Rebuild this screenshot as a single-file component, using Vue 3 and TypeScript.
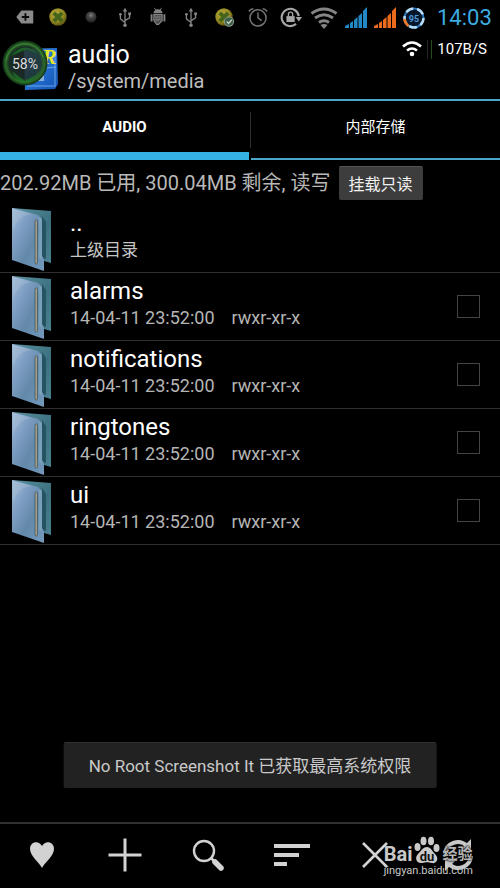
<script setup lang="ts">
import { ref } from 'vue'

interface Entry {
  name: string
  date: string
  mode: string
  checked: boolean
}

const activeTab = ref(0)
const tabs: string[] = ['AUDIO', '内部存储']
const entries = ref<Entry[]>(
  ['alarms', 'notifications', 'ringtones', 'ui'].map((name) => ({
    name,
    date: '14-04-11 23:52:00',
    mode: 'rwxr-xr-x',
    checked: false,
  })),
)
</script>

<template>
  <div class="screen">
    <svg class="defs" aria-hidden="true">
      <defs>
        <linearGradient id="cover" x1="0" y1="0" x2="1" y2="1">
          <stop offset="0" stop-color="#a3bdd9" />
          <stop offset="0.3" stop-color="#7f9fc4" />
          <stop offset="0.6" stop-color="#6389a9" />
          <stop offset="1" stop-color="#7399bd" />
        </linearGradient>
        <linearGradient id="back" x1="0" y1="0" x2="1" y2="1">
          <stop offset="0" stop-color="#5c929f" />
          <stop offset="0.6" stop-color="#3b7180" />
          <stop offset="1" stop-color="#4b8291" />
        </linearGradient>
        <radialGradient id="ball" cx="0.4" cy="0.35" r="0.7">
          <stop offset="0" stop-color="#b5a93c" />
          <stop offset="0.6" stop-color="#978a22" />
          <stop offset="1" stop-color="#4f4a0c" />
        </radialGradient>
        <radialGradient id="dot" cx="0.5" cy="0.35" r="0.6">
          <stop offset="0" stop-color="#858585" />
          <stop offset="0.4" stop-color="#484848" />
          <stop offset="1" stop-color="#242424" />
        </radialGradient>
        <linearGradient id="appBlue" x1="0" y1="0" x2="1" y2="1">
          <stop offset="0" stop-color="#65a5ed" />
          <stop offset="0.5" stop-color="#236fd0" />
          <stop offset="1" stop-color="#1555b5" />
        </linearGradient>
        <radialGradient id="orb">
          <stop offset="0" stop-color="#20262c" stop-opacity="0.82" />
          <stop offset="0.72" stop-color="#1c3328" stop-opacity="0.88" />
          <stop offset="0.88" stop-color="#2c6b27" />
          <stop offset="1" stop-color="#123515" />
        </radialGradient>
        <g id="usb" fill="none" stroke="#858585" stroke-width="1.4">
          <path d="M12 4v17M12 18l-5-4V9M12 16l5-3V9" />
          <path d="M12 2l-2.4 4h4.8z" fill="#858585" stroke="none" />
          <circle cx="12" cy="21" r="1.9" fill="#858585" stroke="none" />
          <circle cx="7" cy="9" r="1.5" fill="#858585" stroke="none" />
          <path d="M15.5 7h3v3h-3z" fill="#858585" stroke="none" />
        </g>
        <g id="clover">
          <circle cx="12" cy="12" r="9.5" fill="url(#ball)" />
          <path d="m12 10 3-3 2 2-3 3 3 3-2 2-3-3-3 3-2-2 3-3-3-3 2-2z" fill="#46651c" stroke="#46651c" stroke-width="1.5" stroke-linejoin="round" />
        </g>
      </defs>
    </svg>

    <div class="status">
      <div class="notices">
        <span><svg viewBox="0 0 24 24"><path d="M2.5 12 8 5h12a1 1 0 0 1 1 1v13H8z" fill="#8a8a8a" /><path d="M12.500 8v8M8.500 12h8" stroke="#080808" stroke-width="2" /></svg></span>
        <span><svg viewBox="0 0 24 24"><use href="#clover" /></svg></span>
        <span><svg viewBox="0 0 24 24"><circle cx="12" cy="12" r="6" fill="url(#dot)" /></svg></span>
        <span><svg viewBox="0 0 24 24"><use href="#usb" /></svg></span>
        <span><svg viewBox="0 0 24 24"><g fill="#858585"><path d="M7 8a5 4.5 0 0 1 10 0zM4 9h2v8H4zM18 9h2v8h-2z" /><path d="m8 2 2 3M16 2l-2 3" stroke="#858585" /></g><path d="M7.5 9.5h9V16l-4 4h-2l-3-4z" fill="#404040" stroke="#858585" stroke-width="1.3" /><path d="M10 11v6M12 11v7M14 11v5M8 12h8M8 15h8" stroke="#999" stroke-width="0.6" /></svg></span>
        <span><svg viewBox="0 0 24 24"><use href="#usb" /></svg></span>
        <span><svg viewBox="0 0 24 24"><use href="#clover" /><circle cx="17.500" cy="17" r="5" fill="#385e45" stroke="#889889" stroke-width="1.2" /><path d="m15 17 2 2 3.5-4" fill="none" stroke="#c4d0c5" stroke-width="1.5" /></svg></span>
        <span><svg viewBox="0 0 24 24"><g fill="none" stroke="#777" stroke-width="1.6"><circle cx="12" cy="13" r="8.8" /><path d="M12 7v6l4 3M2 6q2-3 5-3M17 3q3 0 5 3" /></g></svg></span>
        <span><svg viewBox="0 0 24 24"><path d="M17.500 19.500A9.400 9.400 0 1 1 20.500 11" fill="none" stroke="#a6a6a6" stroke-width="2.300" /><path d="M17 12h7l-3.500 5z" fill="#a6a6a6" /><path d="M7 11h9v6.500H7z" fill="#a6a6a6" /><path d="M9.200 11V9a2.300 2.300 0 0 1 4.600 0v2" fill="none" stroke="#a6a6a6" stroke-width="1.5" /></svg></span>
        <span><svg class="wide" viewBox="0 0 28 24"><g fill="none" stroke="#858585" stroke-width="3"><path d="M1.5 7.5q12.500-9 25 0M5 12q9-6.500 18 0M9 16.500q5-3.500 10 0" /></g><path d="M10.500 19q3.500-2 7 0L14 23z" fill="#858585" /></svg></span>
      </div>
      <div class="radios">
        <span><svg viewBox="0 0 24 24"><path d="M1 22v-2l4-2v4zM6 22v-5l3-2v7zM10 22v-8l3.500-3v11zM14.500 22V10L18 7v15zM19 22V5l4-4v21z" fill="#2389c5" /></svg></span>
        <span><svg viewBox="0 0 24 24"><path d="M1 22v-2l4-2v4zM6 22v-5l3-2v7zM10 22v-8l3.500-3v11zM14.500 22V10L18 7v15zM19 22V5l4-4v21z" fill="#ec6a1c" /></svg></span>
        <span><svg viewBox="0 0 24 24"><circle cx="12" cy="12" r="9.500" fill="#06172b" stroke="#2b78bd" stroke-width="2" /><circle cx="12" cy="12" r="9.500" fill="none" stroke="#b8ddf6" stroke-width="2.500" stroke-dasharray="8 3.900" /><path d="M2.500 13a9.500 9.500 0 0 0 4 7" fill="none" stroke="#ef7926" stroke-width="2.500" /><text class="battery" x="12" y="15.500">95</text></svg></span>
      </div>
      <time>14:03</time>
    </div>

    <header>
      <div class="logo">
        <svg viewBox="0 0 60 56">
          <path d="m24 9 33-1 1 36-3 5-30 1z" fill="url(#appBlue)" />
          <path d="m25 30 31-3M27 46h27M55 12v35" stroke="#81b8f1" stroke-width="0.8" />
          <path d="M36 31h8v10h-8z" fill="#b6cfe5" opacity="0.7" />
          <text class="letter" x="42" y="24">R</text>
          <circle cx="25" cy="23" r="22" fill="url(#orb)" stroke="#12391a" />
          <path d="M11 16Q24 0 38 14L27 9zM12 31l13 10 14-8q-8 11-16 10-7-1-11-12z" fill="#1d7c27" opacity="0.65" />
          <path d="M6 21A19 19 0 0 1 43 17" fill="none" stroke="#479444" opacity="0.7" />
        </svg>
        <span class="percent">58%</span>
      </div>
      <div class="titles">
        <h1>audio</h1>
        <p>/system/media</p>
      </div>
      <div class="speed">
        <svg viewBox="0 0 20 16"><g fill="none" stroke="#fff" stroke-width="2.600"><path d="M1 5.500q9-8 18 0M5 9.500q5-4 10 0" /></g><circle cx="10" cy="13" r="2.300" fill="#fff" /></svg>
        <i></i>
        <span>107B/S</span>
      </div>
    </header>

    <nav>
      <button v-for="(tab, i) in tabs" :key="tab" type="button" :class="{ active: activeTab === i }" @click="activeTab = i">{{ tab }}</button>
    </nav>

    <div class="storage">
      <span>202.92MB 已用, 300.04MB 剩余, 读写</span>
      <button type="button">挂载只读</button>
    </div>

    <ul class="files">
      <li>
        <svg class="folder" viewBox="0 0 42 66"><path d="M1 2 40 5v52l-7-2L1 50z" fill="url(#back)" /><path d="m31 10 4 6v36l-4 3z" fill="#245461" /><path d="M1 2 27 9l4 4v37l2 3v12L1 54z" fill="url(#cover)" /><path d="M2 25Q7 9 21 8L2 3z" fill="#bed0e1" opacity="0.25" /><path d="m28 11 3 2v41l-3-3z" fill="#88adc1" opacity="0.6" /><rect x="24" y="14" width="2.500" height="44" rx="1.200" fill="#a89c80" stroke="#3b5c69" stroke-width="0.8" /></svg>
        <div class="info"><strong>..</strong><p class="parent">上级目录</p></div>
      </li>
      <li v-for="entry in entries" :key="entry.name">
        <svg class="folder" viewBox="0 0 42 66"><path d="M1 2 40 5v52l-7-2L1 50z" fill="url(#back)" /><path d="m31 10 4 6v36l-4 3z" fill="#245461" /><path d="M1 2 27 9l4 4v37l2 3v12L1 54z" fill="url(#cover)" /><path d="M2 25Q7 9 21 8L2 3z" fill="#bed0e1" opacity="0.25" /><path d="m28 11 3 2v41l-3-3z" fill="#88adc1" opacity="0.6" /><rect x="24" y="14" width="2.500" height="44" rx="1.200" fill="#a89c80" stroke="#3b5c69" stroke-width="0.8" /></svg>
        <label class="info" :for="'pick-' + entry.name">
          <strong>{{ entry.name }}</strong>
          <span class="meta"><span>{{ entry.date }}</span><span>{{ entry.mode }}</span></span>
        </label>
        <input :id="'pick-' + entry.name" v-model="entry.checked" type="checkbox" />
      </li>
    </ul>

    <div class="toast" role="status">No Root Screenshot It 已获取最高系统权限</div>

    <footer>
      <button type="button" aria-label="Favorites"><svg viewBox="0 0 36 36"><path d="M18 31C15 25 6 19 6 12 6 4 15 3 18 9 21 3 30 4 30 12c0 7-9 13-12 19z" fill="#d2d2d2" /></svg></button>
      <button type="button" aria-label="Add"><svg viewBox="0 0 36 36"><path d="M18 1.500v33M1.500 18h33" stroke="#d2d2d2" stroke-width="3" /></svg></button>
      <button type="button" aria-label="Search"><svg viewBox="0 0 36 36"><circle cx="14" cy="14" r="10" fill="none" stroke="#d2d2d2" stroke-width="2.400" /><path d="m21 21 4 4" stroke="#d2d2d2" stroke-width="2.500" /><path d="m25 25 6 6" stroke="#d2d2d2" stroke-width="5.500" stroke-linecap="round" /></svg></button>
      <button type="button" aria-label="Sort"><svg viewBox="0 0 36 36"><path d="M0 9h36M0 18h25M0 27h13" stroke="#d2d2d2" stroke-width="4" /></svg></button>
      <button type="button" aria-label="Close"><svg viewBox="0 0 36 36"><path d="m6 6 24 24M30 6 6 30" stroke="#d2d2d2" stroke-width="2.600" /></svg></button>
      <button type="button" aria-label="Refresh"><svg viewBox="0 0 36 36"><g fill="none" stroke="#c8c8c8" stroke-width="4"><path d="M5 17C6 6 19 1 27 9M31 19c-1 11-14 16-22 8" /></g><path d="M31 2v13H18zM5 34V21h13z" fill="#c8c8c8" /></svg></button>
      <div class="mark">
        <div class="brand">
          <b>Bai</b>
          <svg viewBox="0 0 26 28"><g fill="#c9c9c9"><ellipse cx="3.500" cy="11" rx="3" ry="4" /><ellipse cx="9.500" cy="5" rx="3" ry="4.300" /><ellipse cx="17" cy="5" rx="3" ry="4.300" /><ellipse cx="22.500" cy="12" rx="3" ry="4" /><path d="M13 11c4 0 5 4 8 7 5 5 1 10-3 9-4-1-6-1-10 0-5 1-8-5-4-9s5-7 9-7z" /></g><text class="du" x="13" y="25">du</text></svg>
          <b class="cn">经验</b>
        </div>
        <span class="site">jingyan.baidu.com</span>
      </div>
    </footer>
  </div>
</template>

<style>
body {
  margin: 0;
  background: #000;
}
</style>

<style scoped>
.screen {
  position: relative;
  display: flex;
  flex-direction: column;
  min-height: 100vh;
  background: #000;
  color: #fff;
  font-family: Roboto, "Noto Sans CJK SC", sans-serif;
}
h1, p, ul { margin: 0; padding: 0; font-weight: 400; }
button { padding: 0; border: 0; background: none; color: inherit; font-family: inherit; }
svg { display: block; }
.defs { position: absolute; width: 0; height: 0; }

.status { display: flex; align-items: center; height: 35px; padding: 0 8px; }
.notices { display: flex; flex: 333; }
.radios { display: flex; flex: 88; }
.notices span, .radios span { display: flex; flex: 1; justify-content: center; }
.status svg { width: 24px; height: 24px; }
.notices svg { width: 22px; height: 22px; }
.status .wide { width: 28px; height: 24px; }
.status time { width: 55px; margin-left: 8px; color: #3cace0; font-size: 22px; line-height: 34px; }
.battery { fill: #4c9bdc; font-size: 9px; font-weight: 700; text-anchor: middle; }

header { display: flex; align-items: flex-start; height: 64px; border-bottom: 2px solid #4ca6cc; }
.logo { position: relative; width: 60px; height: 60px; padding-top: 5px; margin-right: 8px; }
.logo svg { width: 60px; height: 56px; }
.letter { fill: #e2e52a; font: italic 700 22px "Liberation Serif", serif; }
.percent { position: absolute; top: 19px; left: 0; width: 50px; color: #ddd; font-size: 14px; line-height: 20px; text-align: center; }
.titles { flex: 1; padding-top: 5px; }
h1 { font-size: 25px; line-height: 30px; }
.titles p { color: #bdbdbd; font-size: 20px; line-height: 22px; }
.speed { display: flex; align-items: center; gap: 5px; padding: 4px 13px 0 0; font-size: 15px; line-height: 20px; }
.speed svg { width: 20px; height: 16px; }
.speed i { width: 3px; height: 19px; border-left: 1px solid #242424; border-right: 1px solid #244a18; }

nav { display: flex; gap: 2px; height: 59px; background: linear-gradient(#2e2e2e, #2e2e2e) center 11px / 1px 36px no-repeat; }
nav button { box-sizing: border-box; flex: 1; padding-bottom: 6px; border-bottom: 2px solid #4ca6cc; font-size: 15px; line-height: 40px; }
nav .active { padding-bottom: 0; border-bottom: 8px solid #36b1e3; font-weight: 700; }

.storage { display: flex; align-items: center; gap: 8px; height: 45px; color: #b9b9b9; font-size: 20px; line-height: 28px; white-space: nowrap; }
.storage button { height: 34px; padding: 0 10px; border-top: 1px solid #555; border-radius: 2px; background: #3d3d3d; color: #f2f2f2; font-size: 16px; }

.files { list-style: none; }
.files li { box-sizing: border-box; display: flex; align-items: center; height: 68px; padding: 0 20px 0 11px; border-bottom: 1px solid #303030; }
.folder { width: 42px; height: 66px; margin-right: 17px; }
.info { flex: 1; padding-bottom: 8px; }
.info strong { display: block; font-size: 24px; font-weight: 400; line-height: 30px; }
.meta { display: flex; gap: 17px; color: #b5b5b5; font-size: 18px; line-height: 24px; }
.info .parent { color: #c5c5c5; font-size: 17px; line-height: 24px; }
.files input { appearance: none; box-sizing: border-box; width: 23px; height: 23px; margin: 0; border: 1px solid #444; }
.files input:checked { background: #33b5e5; }

.toast { position: absolute; bottom: 100px; left: 50%; box-sizing: border-box; padding: 11px 25px 9px; transform: translateX(-50%); border-top: 1px solid #303030; border-radius: 2px; background: #222; color: #c9c9c9; font-size: 17px; line-height: 25px; white-space: nowrap; }

footer { position: relative; display: flex; height: 64px; margin-top: auto; border-top: 2px solid #303030; }
footer button { display: flex; flex: 1; align-items: center; justify-content: center; padding-bottom: 3px; }
footer button svg { width: 36px; height: 36px; }
.mark { position: absolute; right: 27px; bottom: 10px; color: #c9c9c9; pointer-events: none; }
.brand { display: flex; align-items: flex-end; gap: 2px; height: 30px; font-size: 20px; line-height: 20px; }
.brand svg { width: 26px; height: 28px; }
.brand .cn { color: #b5b5b5; font-size: 15px; text-shadow: 0 0 2px #000, 0 0 2px #000; }
.du { fill: #111; font-size: 13px; font-weight: 700; text-anchor: middle; }
.site { display: block; font-size: 11px; line-height: 14px; }
</style>
